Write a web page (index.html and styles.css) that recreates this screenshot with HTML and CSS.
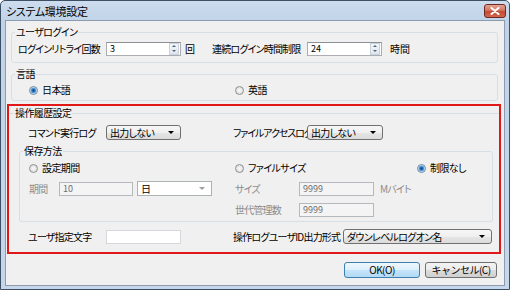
FILE: index.html
```html
<!DOCTYPE html>
<html lang="ja">
<head>
<meta charset="UTF-8">
<title>システム環境設定</title>
<link rel="stylesheet" href="styles.css">
</head>
<body>
<div class="window">
  <div class="titlebar">
    <span class="title">システム環境設定</span>
    <span class="close-btn">
      <svg width="10" height="8" viewBox="0 0 10 8"><path d="M1.5 1 L8.5 7 M8.5 1 L1.5 7" stroke="#fff" stroke-width="2" stroke-linecap="round"/></svg>
    </span>
  </div>

  <div class="client">
    <!-- user login -->
    <fieldset class="group login-group">
      <legend>ユーザログイン</legend>
      <div class="row login-row">
        <span class="label login-label">ログインリトライ回数</span>
        <div class="textbox spinbox"><span class="value">3</span><span class="spin"><i class="up"></i><i class="down"></i></span></div>
        <span class="unit unit-count">回</span>
        <span class="label limit-label">連続ログイン時間制限</span>
        <div class="textbox spinbox"><span class="value">24</span><span class="spin"><i class="up"></i><i class="down"></i></span></div>
        <span class="unit unit-hour">時間</span>
      </div>
    </fieldset>

    <!-- language -->
    <fieldset class="group lang-group">
      <legend>言語</legend>
      <div class="row lang-row">
        <label class="option lang-ja"><span class="radio on"></span>日本語</label>
        <label class="option"><span class="radio"></span>英語</label>
      </div>
    </fieldset>

    <!-- operation history -->
    <div class="highlight">
      <fieldset class="history">
        <legend>操作履歴設定</legend>
        <div class="row history-row">
          <div class="half">
            <span class="label left-label">コマンド実行ログ</span>
            <div class="combo"><span class="value">出力しない</span><span class="arrow"></span></div>
          </div>
          <span class="label access-label">ファイルアクセスログ</span>
          <div class="combo combo-access"><span class="value">出力しない</span><span class="arrow"></span></div>
        </div>

        <fieldset class="group keep-group">
          <legend>保存方法</legend>
          <div class="row keep-row">
            <label class="option keep-left"><span class="radio"></span>設定期間</label>
            <label class="option keep-mid"><span class="radio"></span>ファイルサイズ</label>
            <label class="option"><span class="radio on"></span>制限なし</label>
          </div>
          <div class="row keep-row keep-fields">
            <div class="keep-left period">
              <span class="label disabled period-label">期間</span>
              <div class="textbox off period-box"><span class="value">10</span></div>
              <div class="combo off unit-combo"><span class="value">日</span><span class="arrow"></span></div>
            </div>
            <span class="label disabled size-label">サイズ</span>
            <div class="textbox off size-box"><span class="value">9999</span></div>
            <span class="label disabled size-unit">Mバイト</span>
          </div>
          <div class="row keep-row keep-gen">
            <div class="keep-left"></div>
            <span class="label disabled size-label">世代管理数</span>
            <div class="textbox off size-box"><span class="value">9999</span></div>
          </div>
        </fieldset>

        <div class="row history-row user-row">
          <div class="half">
            <span class="label left-label">ユーザ指定文字</span>
            <div class="textbox user-box"><span class="value"></span></div>
          </div>
          <span class="label format-label">操作ログユーザID出力形式</span>
          <div class="combo combo-format"><span class="value">ダウンレベルログオン名</span><span class="arrow"></span></div>
        </div>
      </fieldset>
    </div>

    <div class="buttons">
      <button class="btn btn-default">OK(O)</button>
      <button class="btn btn-cancel">キャンセル(C)</button>
    </div>
  </div>
</div>
</body>
</html>
```

FILE: styles.css
```css
* {
    box-sizing: border-box;
}

body {
    margin: 0;
    font-family: "Noto Sans CJK JP", "Noto Sans", sans-serif;
    font-size: 10px;
    color: #000;
    font-feature-settings: "palt" 1;
}

.window {
    width: 510px;
    height: 290px;
    display: flex;
    flex-direction: column;
    border: 1px solid #3d4f63;
    border-radius: 5px 5px 0 0;
    background: linear-gradient(#cddcee, #c1d3e8 20px, #c6d7eb);
    padding: 0 4px 3px;
}

.titlebar {
    height: 19px;
    display: flex;
    align-items: center;
    padding-left: 1px;
}

.title {
    font-size: 11px;
    line-height: 14px;
    letter-spacing: -0.3px;
}

.close-btn {
    margin-left: auto;
    margin-right: -1px;
    width: 22px;
    height: 14px;
    display: flex;
    align-items: center;
    justify-content: center;
    border: 1px solid #6e2a22;
    border-radius: 3px;
    background: linear-gradient(#e5a393, #d37560 45%, #c24a33 55%, #d3654c);
}

.client {
    flex: 1;
    background: #f0f0f0;
    border: 1px solid #8c9cae;
    display: flex;
    flex-direction: column;
}

/* group boxes */
fieldset {
    margin: 0;
    min-width: 0;
}

legend {
    padding: 0 1px;
    height: 14px;
    line-height: 14px;
    letter-spacing: -0.6px;
}

.group {
    border: 1px solid #d5dfe5;
    border-radius: 3px;
    padding: 2px 0 6px 3px;
}

.login-group {
    margin: 4px 6px 0 5px;
}

.lang-group {
    margin: 4px 6px 0 5px;
    padding-bottom: 3px;
}

.row {
    display: flex;
    align-items: center;
    height: 15px;
    white-space: nowrap;
}

.row > *,
.half > *,
.period > * {
    flex: none;
}

.label {
    line-height: 14px;
    letter-spacing: -0.8px;
}

.disabled {
    color: #8d8d8d;
}

.login-row {
    margin-left: 3px;
}

.login-label {
    width: 88px;
}

.limit-label {
    width: 95px;
}

.unit {
    margin-left: 4px;
}

.unit-count {
    width: 27px;
}

.unit-hour {
    margin-left: 8px;
}

.lang-row {
    margin-left: 14px;
    height: 14px;
}

.option {
    display: flex;
    align-items: center;
    line-height: 14px;
    letter-spacing: -0.6px;
}

.lang-ja {
    width: 206px;
}

/* radio */
.radio {
    width: 9px;
    height: 9px;
    border-radius: 50%;
    border: 1px solid #8e8f8f;
    background: radial-gradient(circle, #fafafa 0, #d6d6d6 100%);
    margin-right: 4px;
    flex: none;
}

.radio.on {
    border-color: #6b89a6;
    background: radial-gradient(circle, #0f3f78 0, #2f78c0 1.6px, #7ab8ea 2.8px, #e4eef6 3.3px, #f4f4f4 100%);
}

/* text boxes */
.textbox {
    height: 14px;
    width: 75px;
    border: 1px solid #abadb3;
    border-top-color: #8d9096;
    background: #fff;
    display: flex;
    align-items: center;
}

.value {
    font-size: 9px;
    line-height: 12px;
    padding-left: 3px;
    flex: 1;
}

.textbox.off {
    background: #f4f4f4;
    border-color: #b5b9bd;
    color: #6d6d6d;
}

.spin {
    width: 10px;
    height: 12px;
    display: flex;
    flex-direction: column;
    margin-right: 1px;
    border: 1px solid #c8d2dc;
    background: linear-gradient(#f4f7fa, #dfe6ed);
}

.spin i {
    flex: 1;
    display: flex;
    align-items: center;
    justify-content: center;
}

.spin .up::before,
.spin .down::before {
    content: "";
    border-left: 2px solid transparent;
    border-right: 2px solid transparent;
}

.spin .up::before {
    border-bottom: 2px solid #4e6478;
}

.spin .down::before {
    border-top: 2px solid #4e6478;
}

/* combo boxes */
.combo {
    height: 15px;
    width: 75px;
    border: 1px solid #707070;
    border-radius: 3px;
    background: linear-gradient(#f7f7f7, #efefef 50%, #e5e5e5 50%, #dcdcdc);
    display: flex;
    align-items: center;
}

.combo .value {
    font-size: 10px;
    line-height: 13px;
    letter-spacing: -0.7px;
}

.combo .arrow {
    width: 0;
    height: 0;
    margin-right: 6px;
    border-left: 3px solid transparent;
    border-right: 3px solid transparent;
    border-top: 3px solid #000;
}

.combo.off {
    background: #fff;
    border-color: #adb2b5;
    border-radius: 0;
}

.combo.off .arrow {
    border-top-color: #a0a0a0;
}

/* operation history */
.highlight {
    margin: 3px 3px 0 1px;
    border: 2px solid #e01818;
}

.history {
    border: none;
    border-top: 1px solid #d5dfe5;
    padding: 5px 6px 8px 5px;
}

.history-row {
    margin-left: 14px;
}

.half {
    width: 205px;
    display: flex;
    align-items: center;
}

.left-label {
    width: 78px;
}

.access-label {
    width: 74px;
    letter-spacing: -1.1px;
}

.combo-access {
    width: 76px;
}

.keep-group {
    margin: 4px 0 0 5px;
    padding: 3px 0 4px 3px;
}

.keep-row {
    margin-left: 6px;
    height: 14px;
}

.keep-fields {
    margin-top: 6px;
    height: 15px;
}

.keep-gen {
    margin-top: 7px;
}

.keep-left {
    width: 206px;
}

.keep-mid {
    width: 182px;
}

.period {
    display: flex;
    align-items: center;
}

.period-label {
    width: 30px;
}

.period-box {
    width: 74px;
}

.unit-combo {
    margin-left: 4px;
}

.size-label {
    width: 64px;
}

.size-unit {
    margin-left: 6px;
}

.user-row {
    margin-top: 7px;
}

.user-box {
    width: 75px;
    border-color: #d4d7dc;
}

.format-label {
    width: 110px;
}

.combo-format {
    width: 149px;
}

/* buttons */
.buttons {
    display: flex;
    justify-content: flex-end;
    gap: 5px;
    margin: 8px 7px 0 0;
}

.btn {
    height: 16px;
    padding: 0;
    font-family: inherit;
    font-size: 10px;
    line-height: 12px;
    letter-spacing: -0.5px;
    border: 1px solid #707070;
    border-radius: 3px;
    background: linear-gradient(#f3f3f3, #ebebeb 50%, #dddddd 50%, #cfcfcf);
    color: #000;
}

.btn-default {
    width: 76px;
    border-color: #3c7fb1;
    background: linear-gradient(#eef7fd, #dceffb 50%, #c5e4f9 50%, #b3daf6);
}

.btn-cancel {
    width: 72px;
}
```
